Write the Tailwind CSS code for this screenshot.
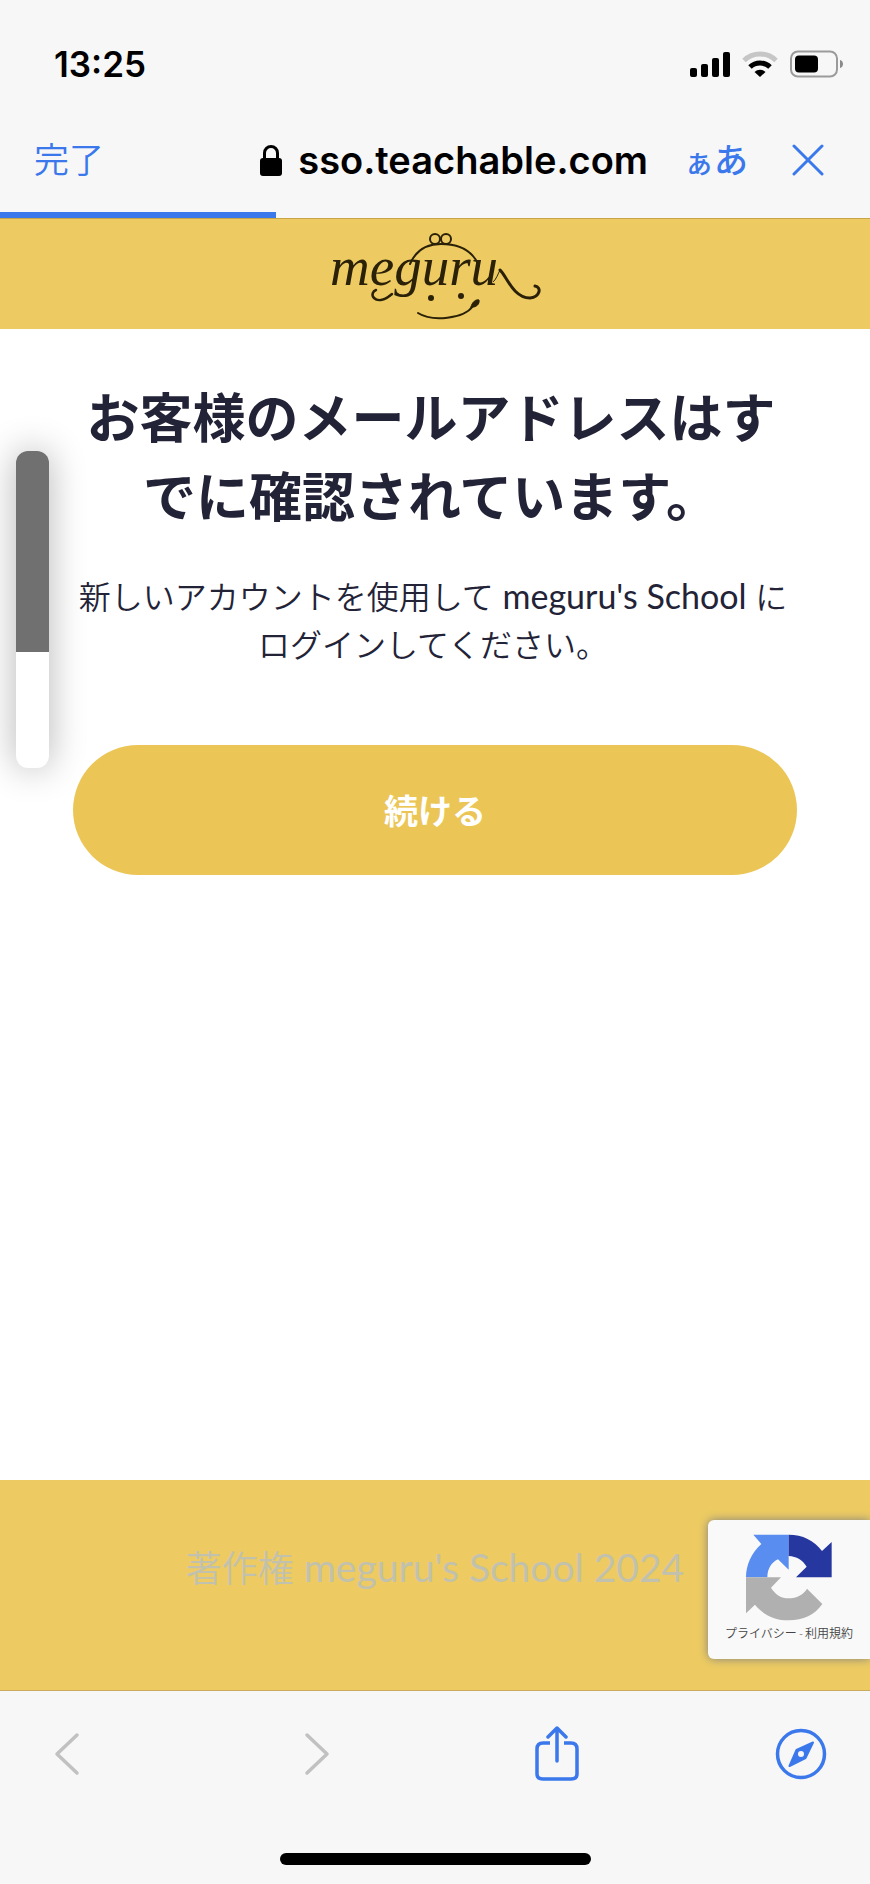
<!DOCTYPE html>
<html lang="ja">
<head>
    <meta charset="UTF-8">
    <meta name="viewport" content="width=device-width, initial-scale=1.0">
    <title>meguru's School</title>
    <script src="https://cdn.jsdelivr.net/npm/@tailwindcss/browser@4"></script>
</head>
<body class="relative flex min-h-screen flex-col bg-white text-[#232338] font-['Lato','Noto_Sans_CJK_JP',sans-serif]">
    <!-- Browser chrome -->
    <header class="bg-[#f7f7f7] font-['Inter','Noto_Sans_CJK_JP',sans-serif]">
        <div class="flex items-center justify-between pt-10 pl-[54px] pr-[26px] text-black">
            <span class="text-[35px] leading-[48px] font-semibold">13:25</span>
            <div class="flex items-center gap-3">
                <svg class="h-[26px] w-10" viewBox="0 0 40 26" fill="currentColor">
                    <rect x="0" y="17" width="7" height="9" rx="2"/>
                    <rect x="11" y="13" width="7" height="13" rx="2"/>
                    <rect x="22" y="7" width="7" height="19" rx="2"/>
                    <rect x="33" y="1" width="7" height="25" rx="2"/>
                </svg>
                <svg class="h-[26px] w-9" viewBox="0 0 36 26" fill="none" stroke-width="5">
                    <path d="M2 9.500a23 23 0 0 1 32 0" stroke="#c6c6c6"/>
                    <path d="M8 16a14.500 14.500 0 0 1 20 0" stroke="#000"/>
                    <path d="M12.500 21a8 8 0 0 1 11 0L18 26z" fill="#000"/>
                </svg>
                <svg class="h-7 w-[54px]" viewBox="0 0 54 28">
                    <rect x="1" y="1.500" width="46" height="25" rx="7" fill="none" stroke="#9b9b9b" stroke-width="2"/>
                    <rect x="5" y="5.500" width="23" height="17" rx="4" fill="#000"/>
                    <path d="M50 10c4 1 4 7 0 8z" fill="#8b8b8b"/>
                </svg>
            </div>
        </div>
        <nav class="mt-5 flex h-[104px] items-center justify-between pl-[34px] pr-[46px]">
            <button class="text-[35px] font-[350] text-[#3a78ec]">完了</button>
            <div class="flex items-center gap-9">
                <div class="flex items-center gap-4 text-black">
                    <svg class="h-[31px] w-[22px]" viewBox="0 0 22 31">
                        <rect x="0" y="13" width="22" height="18" rx="3" fill="#000"/>
                        <path d="M4.500 14V8a6.500 6.500 0 0 1 13 0v6" fill="none" stroke="#000" stroke-width="3"/>
                    </svg>
                    <span class="text-[38px] font-semibold">sso.teachable.com</span>
                </div>
                <div class="flex items-center gap-11">
                    <button class="flex items-baseline text-[#3a78ec]" aria-label="表示設定">
                        <span class="text-[30px] font-medium">ぁ</span><span class="text-[34px] font-medium">あ</span>
                    </button>
                    <button aria-label="閉じる">
                        <svg class="size-8" viewBox="0 0 32 32" fill="none" stroke="#3a78ec" stroke-width="3" stroke-linecap="round">
                            <path d="M2 2l28 28M30 2L2 30"/>
                        </svg>
                    </button>
                </div>
            </div>
        </nav>
        <div class="h-[6px]">
            <div class="h-full bg-[#3a78ec]" style="width: 31.7%"></div>
        </div>
    </header>

    <!-- School logo -->
    <div class="flex h-[111px] items-center justify-center border-t border-[#c9a548] bg-[#edcb62] pt-1">
        <svg class="h-[90px] w-[214px]" viewBox="0 0 214 90" fill="none" stroke="#2b2108" stroke-linecap="round" role="img" aria-label="meguru">
            <circle cx="107" cy="8" r="5" stroke-width="2"/>
            <circle cx="118" cy="8" r="5" stroke-width="2"/>
            <path d="M82 33C88 19 99 13 113 13C131 13 145 20 151 35" stroke-width="2"/>
            <text x="2" y="54" font-family="'Liberation Serif', serif" font-style="italic" font-size="55" fill="#2b2108" stroke="none">meguru</text>
            <path d="M64 63C57 69 50 71 46 67C43 64 45 60 48 59" stroke-width="2.500"/>
            <path d="M165 51C168 49 170 43 172 39" stroke-width="1"/>
            <path d="M172 39C178 44 185 67 202 67C212 66 214 56 207 55" stroke-width="3"/>
            <circle cx="103" cy="67" r="3" fill="#2b2108" stroke="none"/>
            <circle cx="133" cy="65" r="3" fill="#2b2108" stroke="none"/>
            <path d="M90 82C104 91 136 88 145 75" stroke-width="2"/>
            <path d="M143 76C144 71 148 68 151 69C152 73 148 77 143 76z" fill="#2b2108"/>
        </svg>
    </div>

    <main class="flex-1 px-[73px] pt-[49px] text-center">
        <h1 class="pr-2 text-[53px] leading-[79px] font-bold">お客様のメールアドレスはすでに確認されています。</h1>
        <p class="mt-9 pr-1 text-[32px] leading-[48px] font-[350]">新しいアカウントを使用して <span class="text-[34px] font-normal">meguru's School</span> に<br>ログインしてください。</p>
        <button class="mt-[76px] h-[130px] w-full rounded-full bg-[#ebc657] text-[34px] font-bold text-white">続ける</button>
    </main>

    <footer class="relative border-b border-[#c9ab5c] bg-[#edcb62] pt-[60px] pb-[95px] text-center text-[39px] leading-[54px] text-[#c1c1ae]">
        <span class="text-[36px] font-[350]">著作権</span> meguru's School 2024
        <!-- reCAPTCHA badge -->
        <div class="absolute top-10 right-0 flex h-[139px] w-[162px] flex-col items-center rounded-l-md bg-[#f9f9f9] pt-[13px] shadow-[0_0_10px_#808080]">
            <svg class="h-[90px] w-[88px]" viewBox="195 130 264 270">
                <path d="M220 135H326V240L294 209C274 218 262 238 262 263H198C198 226 214 190 244 163z" fill="#5a8df0"/>
                <path d="M326 135C368 135 402 152 426 184L455 157V263H348L380 231C368 212 350 200 326 199z" fill="#26379f"/>
                <path d="M198 263H303L273 294C286 315 304 326 326 326C350 326 370 315 381 297L427 343C404 376 370 392 326 392C284 392 250 376 225 345L198 371z" fill="#b0b0b0"/>
            </svg>
            <div class="flex gap-0.5 text-[12px] leading-[22px] font-[350] text-[#444]">
                <a href="#">プライバシー</a><span>-</span><a href="#">利用規約</a>
            </div>
        </div>
    </footer>

    <!-- Toolbar -->
    <div class="bg-[#f7f7f7]">
        <div class="flex h-[126px] items-center justify-between pl-[41px] pr-[43px]">
            <button aria-label="戻る" disabled>
                <svg class="h-14 w-[52px]" viewBox="0 0 52 56" fill="none" stroke="#c1c1c1" stroke-width="3.500" stroke-linecap="round" stroke-linejoin="round">
                    <path d="M36 9L16 28l20 19"/>
                </svg>
            </button>
            <button aria-label="進む" disabled>
                <svg class="h-14 w-[52px]" viewBox="0 0 52 56" fill="none" stroke="#c1c1c1" stroke-width="3.500" stroke-linecap="round" stroke-linejoin="round">
                    <path d="M21 9l20 19-20 19"/>
                </svg>
            </button>
            <button aria-label="共有">
                <svg class="h-14 w-[52px]" viewBox="0 0 52 56" fill="none" stroke="#3a78ec" stroke-width="3.500" stroke-linejoin="round">
                    <path d="M20 17h-7q-6 0-6 6v25q0 5 6 5h28q6 0 6-5v-25q0-6-6-6h-7"/>
                    <path d="M27 35V2M18 11l9-9 9 9" stroke-linecap="round"/>
                </svg>
            </button>
            <button aria-label="Safariで開く">
                <svg class="h-14 w-[52px]" viewBox="0 0 52 56">
                    <circle cx="26" cy="28" r="23.500" fill="none" stroke="#3a78ec" stroke-width="3.500"/>
                    <path d="M38 16.500L30.500 32 14.500 40 21.500 24z" fill="#3a78ec" stroke="#3a78ec" stroke-width="2" stroke-linejoin="round"/>
                    <circle cx="26" cy="28" r="3" fill="#f7f7f7"/>
                </svg>
            </button>
        </div>
        <div class="flex h-[67px] justify-center pt-9">
            <div class="h-3 w-[311px] rounded-full bg-black"></div>
        </div>
    </div>

    <!-- Volume indicator -->
    <div class="absolute top-[451px] left-4 h-[317px] w-[33px] overflow-hidden rounded-xl bg-white shadow-[0_0_36px_rgba(0,0,0,0.3)]">
        <div class="bg-[#707070]" style="height: 63.4%"></div>
    </div>
</body>
</html>
